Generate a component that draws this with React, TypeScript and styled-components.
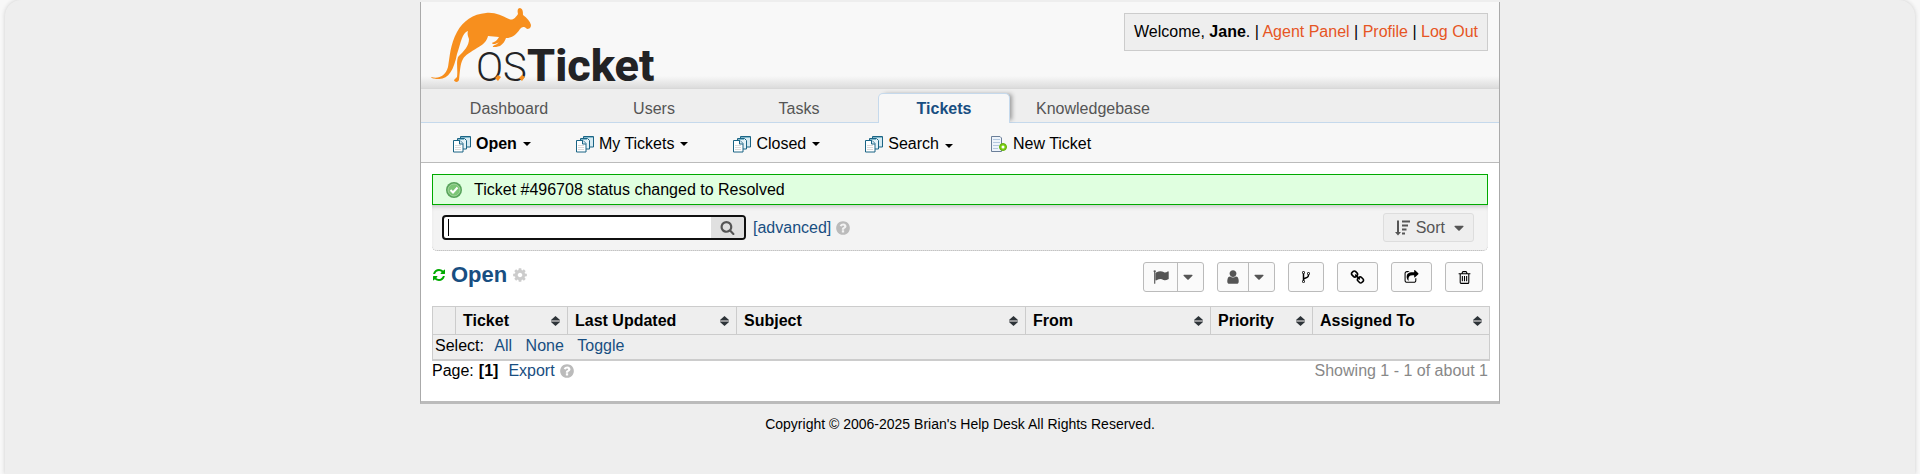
import React from "react";
import styled, { createGlobalStyle, css } from "styled-components";

const GlobalStyle = createGlobalStyle`
  * { box-sizing: border-box; }
  body {
    margin: 0;
    background: #f8f8f8;
    color: #000;
    font: 16px/20px "Liberation Sans", Arial, sans-serif;
  }
  a { color: #184e81; text-decoration: none; }
  button, input { font: inherit; margin: 0; }
`;

const Page = styled.div`
  min-height: 100vh;
  margin: 0 5px;
  padding-top: 2px;
  border-radius: 16px 16px 0 0;
  background: #eee;
  box-shadow: 0 0 4px #ccc;
`;

const Container = styled.div`
  max-width: 1080px;
  margin: 0 auto;
  background: #fff;
  border: 1px solid #aaa;
  border-top: 0;
  border-bottom: 3px solid #bbb;
`;

const Header = styled.header`
  display: flex;
  justify-content: space-between;
  align-items: flex-start;
  height: 87px;
  padding: 0 11px 0 9px;
  background: linear-gradient(to top, #dcdcdc, #f8f8f8 12px);
  border-bottom: 1px solid #d8d8d8;
`;

const UserInfo = styled.p`
  margin: 11px 0 0;
  padding: 8px 9px;
  background: #eee;
  border: 1px solid #ccc;
  a { color: #e65524; }
`;

const Tabs = styled.nav`
  display: flex;
  align-items: flex-end;
  gap: 13px;
  height: 34px;
  padding-left: 22px;
  background: #eee;
  border-bottom: 1px solid #c5d9ec;
`;

const Tab = styled.a<{ $active?: boolean }>`
  min-width: 132px;
  height: 29px;
  padding: 0 12px;
  border: 1px solid transparent;
  border-bottom: 0;
  line-height: 30px;
  text-align: center;
  color: #555;
  ${(p) =>
    p.$active &&
    css`
      height: 30px;
      margin-bottom: -1px;
      background: #f7f7f7;
      border-color: #c5d9ec;
      border-radius: 5px 5px 0 0;
      box-shadow: 4px -1px 4px -2px #999;
      clip-path: inset(-6px -8px 0 -6px);
      color: #184e81;
      font-weight: bold;
    `}
`;

const SubNav = styled.nav`
  display: flex;
  align-items: center;
  gap: 37px;
  height: 40px;
  padding: 2px 0 0 32px;
  background: #f7f7f7;
  border-bottom: 1px solid #bbb;
`;

const SubItem = styled.a<{ $current?: boolean }>`
  display: flex;
  align-items: center;
  gap: 5px;
  color: #000;
  font-weight: ${(p) => (p.$current ? "bold" : "normal")};
`;

const MenuItem = styled(SubItem)`
  & + & { margin-left: 8px; }
`;

const MenuArrow = styled.span<{ $low?: boolean }>`
  margin: ${(p) => (p.$low ? "5px 0 0 1px" : "0 0 0 1px")};
  border: 4px solid transparent;
  border-top-color: currentColor;
  border-bottom: 0;
`;

const Content = styled.main`
  padding: 11px 9px 20px 11px;
`;

const Notice = styled.div`
  display: flex;
  align-items: center;
  gap: 12px;
  height: 31px;
  margin-right: 2px;
  padding-left: 13px;
  background: #e0ffe0;
  border: 1px solid #0a0;
`;

const SearchBar = styled.form`
  display: flex;
  align-items: center;
  height: 46px;
  margin-right: 2px;
  padding: 0 14px 0 10px;
  background: #f3f3f3;
  border-bottom: 1px dotted #aaa;
  border-radius: 0 0 5px 5px;
  box-shadow: inset 0 4px 5px -3px #bbb;
`;

const SearchBox = styled.div`
  display: flex;
  width: 304px;
  height: 25px;
  margin-right: 7px;
  border: 2px solid #101010;
  border-radius: 4px;
  overflow: hidden;
  background: #fff;
`;

const SearchInput = styled.input`
  flex: 1;
  min-width: 0;
  padding: 0 4px;
  border: 0;
  outline: 0;
  caret-color: transparent;
  background: linear-gradient(#000, #000) 4px 2px / 1px 17px no-repeat;
`;

const SearchButton = styled.button`
  width: 33px;
  padding: 0;
  border: 0;
  background: #e0e0e0;
  color: #555;
  line-height: 0;
`;

const HelpLink = styled.a`
  display: inline-flex;
  margin-left: 4px;
  color: #bbb;
`;

const SortButton = styled.button`
  display: flex;
  align-items: center;
  gap: 6px;
  height: 29px;
  margin-left: auto;
  padding: 0 6px 0 11px;
  background: #eee;
  border: 1px solid #ddd;
  border-radius: 3px;
  color: #555;
`;

const TitleRow = styled.div`
  display: flex;
  justify-content: space-between;
  align-items: flex-start;
  padding: 11px 7px 14px 0;
`;

const Title = styled.h2`
  display: flex;
  align-items: center;
  gap: 5px;
  margin: 0;
  font-size: 22px;
  line-height: 26px;
  color: #184e81;
`;

const IconLink = styled.a<{ $color: string }>`
  display: inline-flex;
  color: ${(p) => p.$color};
`;

const Actions = styled.div`
  display: flex;
  gap: 13px;
`;

const Action = styled.button<{ $width: number; $muted?: boolean }>`
  display: flex;
  align-items: stretch;
  justify-content: center;
  width: ${(p) => p.$width}px;
  height: 30px;
  padding: 0;
  background: #fafafa;
  border: 1px solid #bbb;
  border-radius: 3px;
  color: ${(p) => (p.$muted ? "#555" : "#000")};
`;

const ActionPart = styled.span`
  display: flex;
  flex: 1;
  align-items: center;
  justify-content: center;
  & + & {
    flex: 0 0 26px;
    padding-right: 5px;
    border-left: 1px solid #bbb;
  }
`;

const TicketTable = styled.table`
  width: 100%;
  table-layout: fixed;
  border-collapse: separate;
  border-spacing: 0;
  background: #eee;
  border: 1px solid #ccc;
  border-bottom-width: 2px;
`;

const HeadCell = styled.th`
  height: 28px;
  padding: 0 7px 0 7px;
  text-align: left;
  border-bottom: 1px solid #ccc;
  &:not(:last-child) { border-right: 1px solid #ccc; }
`;

const HeadLabel = styled.span`
  display: flex;
  align-items: center;
  justify-content: space-between;
  white-space: nowrap;
`;

const FootCell = styled.td`
  height: 24px;
  padding: 0 2px 2px;
  a { margin-left: 6px; }
  a + a { margin-left: 9px; }
`;

const Pager = styled.div`
  display: flex;
  align-items: center;
  height: 20px;
  margin-right: 2px;
  b { margin-left: 5px; }
  a { margin-left: 10px; }
  a + a { margin-left: 4px; }
`;

const Count = styled.span`
  margin-left: auto;
  color: #888;
`;

const Footer = styled.footer`
  padding: 10px 0;
  text-align: center;
  font-size: 14px;
`;

const paths = {
  search:
    "M1216 832q0-185-131.5-316.5t-316.5-131.5-316.5 131.5-131.5 316.5 131.5 316.5 316.5 131.5 316.5-131.5 131.5-316.5zm512 832q0 52-38 90t-90 38q-54 0-90-38l-343-342q-179 124-399 124-143 0-273.5-55.5t-225-150-150-225-55.5-273.5 55.5-273.5 150-225 225-150 273.5-55.5 273.5 55.5 225 150 150 225 55.5 273.5q0 220-124 399l343 343q37 37 37 90z",
  help:
    "M1024 1376v-192q0-14-9-23t-23-9h-192q-14 0-23 9t-9 23v192q0 14 9 23t23 9h192q14 0 23-9t9-23zm256-672q0-88-55.5-163t-138.5-116-170-41q-243 0-371 213-15 24 8 42l132 100q7 6 19 6 16 0 25-12 53-68 86-92 34-24 86-24 48 0 85.5 26t37.5 59q0 38-20 61t-68 45q-63 28-115.5 86.5t-52.5 125.5v36q0 14 9 23t23 9h192q14 0 23-9t9-23q0-19 21.5-49.5t54.5-49.5q32-18 49-28.5t46-35 44.5-48 28-60.5 12.5-81zm384 192q0 209-103 385.5t-279.5 279.5-385.5 103-385.5-103-279.5-279.5-103-385.5 103-385.5 279.5-279.5 385.5-103 385.5 103 279.5 279.5 103 385.5z",
  refresh:
    "M1639 1056q0 5-1 7-64 268-268 434.5t-478 166.5q-146 0-282.5-55t-243.5-157l-129 129q-19 19-45 19t-45-19-19-45v-448q0-26 19-45t45-19h448q26 0 45 19t19 45-19 45l-137 137q71 66 161 102t187 36q134 0 250-65t186-179q11-17 53-117 8-23 30-23h192q13 0 22.5 9.5t9.5 22.5zm25-800v448q0 26-19 45t-45 19h-448q-26 0-45-19t-19-45 19-45l138-138q-148-137-349-137-134 0-250 65t-186 179q-11 17-53 117-8 23-30 23h-199q-13 0-22.5-9.5t-9.5-22.5v-7q65-268 270-434.5t480-166.5q146 0 284 55.5t245 156.5l130-129q19-19 45-19t45 19 19 45z",
  cog:
    "M1152 896q0-106-75-181t-181-75-181 75-75 181 75 181 181 75 181-75 75-181zm512-109v222q0 12-8 23t-20 13l-185 28q-19 54-39 91 35 50 107 138 10 12 10 25t-9 23q-27 37-99 108t-94 71q-12 0-26-9l-138-108q-44 23-91 38-16 136-29 186-7 28-36 28h-222q-14 0-24.5-8.5t-11.5-21.5l-28-184q-49-16-90-37l-141 107q-10 9-25 9-14 0-25-11-126-114-165-168-7-10-7-23 0-12 8-23 15-21 51-66.5t54-70.5q-27-50-41-99l-183-27q-13-2-21-12.5t-8-23.5v-222q0-12 8-23t19-13l186-28q14-46 39-92-40-57-107-138-10-12-10-24 0-10 9-23 26-36 98.5-107.5t94.5-71.5q13 0 26 10l138 107q44-23 91-38 16-136 29-186 7-28 36-28h222q14 0 24.5 8.5t11.5 21.5l28 184q49 16 90 37l142-107q9-9 24-9 13 0 25 10 129 119 165 170 7 8 7 22 0 12-8 23-15 21-51 66.5t-54 70.5q26 50 41 98l183 28q13 2 21 12.5t8 23.5z",
  fork:
    "M672 1472q0-40-28-68t-68-28-68 28-28 68 28 68 68 28 68-28 28-68zm0-1152q0-40-28-68t-68-28-68 28-28 68 28 68 68 28 68-28 28-68zm640 128q0-40-28-68t-68-28-68 28-28 68 28 68 68 28 68-28 28-68zm96 0q0 52-26 96.5t-70 69.5q-2 287-226 414-67 38-203 81-128 40-169.5 71t-41.5 100v26q44 25 70 69.5t26 96.5q0 80-56 136t-136 56-136-56-56-136q0-52 26-96.5t70-69.5v-820q-44-25-70-69.5t-26-96.5q0-80 56-136t136-56 136 56 56 136q0 52-26 96.5t-70 69.5v497q54-26 154-57 55-17 87.5-29.5t70.5-31 59-39.5 40.5-51 28-69.5 8.5-91.5q-44-25-70-69.5t-26-96.5q0-80 56-136t136-56 136 56 56 136z",
  link:
    "M1520 1216q0-40-28-68l-208-208q-28-28-68-28-42 0-72 32 3 3 19 18.5t21.5 21.5 15 19 13 25.5 3.5 27.5q0 40-28 68t-68 28q-15 0-27.5-3.5t-25.5-13-19-15-21.5-21.5-18.5-19q-33 31-33 73 0 40 28 68l206 207q27 27 68 27 40 0 68-26l147-146q28-28 28-67zm-703-705q0-40-28-68l-206-207q-28-28-68-28-39 0-68 27l-147 146q-28 28-28 67 0 40 28 68l208 208q27 27 68 27 42 0 72-31-3-3-19-18.5t-21.5-21.5-15-19-13-25.5-3.5-27.5q0-40 28-68t68-28q15 0 27.5 3.5t25.5 13 19 15 21.5 21.5 18.5 19q33-31 33-73zm895 705q0 120-85 203l-147 146q-83 83-203 83-121 0-204-85l-206-207q-83-83-83-203 0-123 88-209l-88-88q-86 88-208 88-120 0-204-84l-208-208q-84-84-84-204t85-203l147-146q83-83 203-83 121 0 204 85l206 207q83 83 83 203 0 123-88 209l88 88q86-88 208-88 120 0 204 84l208 208q84 84 84 204z",
  share:
    "M1472 989v259q0 119-84.5 203.5t-203.5 84.5h-832q-119 0-203.5-84.5t-84.5-203.5v-832q0-119 84.5-203.5t203.5-84.5h255q13 0 22.5 9.5t9.5 22.5q0 27-26 32-77 26-133 60-10 4-16 4h-112q-66 0-113 47t-47 113v832q0 66 47 113t113 47h832q66 0 113-47t47-113v-214q0-19 18-29 28-13 54-37 16-16 35-8 21 9 21 29zm237-496l-384 384q-18 19-45 19-12 0-25-5-39-17-39-59v-192h-160q-323 0-438 131-119 137-74 473 3 23-20 34-8 2-12 2-16 0-26-13-10-14-21-31t-39.5-68.5-49.5-99.5-38.5-114-17.5-122q0-49 3.5-91t14-90 28-88 47-81.5 68.5-74 94.5-61.5 124.5-48.5 159.5-30.5 196.5-11h160v-192q0-42 39-59 13-5 25-5 26 0 45 19l384 384q19 19 19 45t-19 45z",
  trash:
    "M704 736v576q0 14-9 23t-23 9h-64q-14 0-23-9t-9-23v-576q0-14 9-23t23-9h64q14 0 23 9t9 23zm256 0v576q0 14-9 23t-23 9h-64q-14 0-23-9t-9-23v-576q0-14 9-23t23-9h64q14 0 23 9t9 23zm256 0v576q0 14-9 23t-23 9h-64q-14 0-23-9t-9-23v-576q0-14 9-23t23-9h64q14 0 23 9t9 23zm128 724v-948h-896v948q0 22 7 40.5t14.5 27 10.5 8.5h832q3 0 10.5-8.5t14.5-27 7-40.5zm-672-1076h448l-48-117q-7-9-17-11h-317q-10 2-17 11zm928 32v64q0 14-9 23t-23 9h-96v948q0 83-47 143.5t-113 60.5h-832q-66 0-113-58.5t-47-141.5v-952h-96q-14 0-23-9t-9-23v-64q0-14 9-23t23-9h309l70-167q15-37 54-63t79-26h320q40 0 79 26t54 63l70 167h309q14 0 23 9t9 23z",
  flag:
    "M320 256q0 72-64 110v1266q0 13-9.500 22.500t-22.500 9.500h-64q-13 0-22.500-9.500t-9.500-22.500v-1266q-64-38-64-110 0-53 37.500-90.500t90.500-37.500 90.500 37.500 37.500 90.500zm1440 64v763q0 25-12.500 38.500t-39.500 27.500q-215 116-369 116-61 0-123.500-22t-108.500-48-115.500-48-142.500-22q-192 0-464 146-17 9-33 9-26 0-45-19t-19-45v-742q0-32 31-55 21-14 79-43 236-120 421-120 107 0 200 29t219 88q38 19 88 19 54 0 117.500-21t110-47 88-47 54.500-21q26 0 45 19t19 45z",
  user:
    "M1536 1399q0 109-62.500 187t-150.500 78h-854q-88 0-150.500-78t-62.500-187q0-85 8.500-160.500t31.500-152 58.500-131 94-89 134.500-34.500q131 128 313 128t313-128q76 0 134.500 34.500t94 89 58.500 131 31.500 152 8.500 160.500zm-256-887q0 159-112.500 271.500t-271.500 112.500-271.500-112.500-112.500-271.500 112.500-271.500 271.500-112.500 271.500 112.500 112.500 271.500z",
  caret:
    "M1408 704q0 26-19 45l-448 448q-19 19-45 19t-45-19l-448-448q-19-19-19-45t19-45 45-19h896q26 0 45 19t19 45z",
};

function Icon({ name, size = 16 }: { name: keyof typeof paths; size?: number }) {
  return (
    <svg width={size} height={size} viewBox="0 0 1792 1792" fill="currentColor" aria-hidden="true">
      <path d={paths[name]} />
    </svg>
  );
}

function StackIcon() {
  return (
    <svg width="18" height="18" viewBox="0 0 18 18" stroke="#1a6485" aria-hidden="true">
      <path d="M7.500 1.500h10v10.500h-10z" fill="#d5eaf2" />
      <path d="M8 2.500h9" stroke="#82b8cb" />
      <path d="M4.500 3.500h7l2 2v8.500h-9z" fill="#e6f3f8" />
      <path d="M5 4.500h6" stroke="#82b8cb" />
      <path d="M.5 5.500h6.500l3 3v8.500h-9.500z" fill="#fff" />
      <path d="M6.500 5.500v3.500h3.500" fill="#d5eaf2" />
      <path d="M2 10.500h6M2 12.500h6M2 14.500h6" stroke="#dadada" />
    </svg>
  );
}

function NewTicketIcon() {
  return (
    <svg width="18" height="18" viewBox="0 0 18 18" aria-hidden="true">
      <path d="M1.500 1.500h8.500l1.500 1.500v13.500h-10z" fill="#eef4fb" stroke="#6b7f99" />
      <path d="M3 4.500h7M3 7.500h7M3 10.500h6M3 13.500h5" stroke="#b3c8df" />
      <circle cx="13" cy="12" r="3.500" fill="#7ed012" stroke="#5fae0c" />
      <circle cx="13" cy="12" r="1.500" fill="#fff" />
    </svg>
  );
}

function OkIcon() {
  return (
    <svg width="16" height="16" viewBox="0 0 16 16" aria-hidden="true">
      <circle cx="8" cy="8" r="8" fill="#57a35a" />
      <circle cx="8" cy="8" r="6" fill="#7cc576" stroke="#a4d79e" />
      <path d="M4.500 8l2.500 2.500 4.500-5" fill="none" stroke="#fff" strokeWidth="2" />
    </svg>
  );
}

function SortIcon() {
  return (
    <svg width="15" height="16" viewBox="0 0 15 16" fill="currentColor" aria-hidden="true">
      <path d="M2 .5h2v11.500h2l-3 3.500-3-3.500h2zM7 .5h8v2h-8zM7 4.500h6v2h-6zM7 8.500h4.500v2h-4.500zM7 12.500h3v2h-3z" />
    </svg>
  );
}

function SortArrows() {
  return (
    <svg width="9" height="10" viewBox="0 0 9 10" fill="#2d3338" aria-hidden="true">
      <path d="M4.500 0l4.500 4v.5h-9v-.5zM0 5.500h9v.5l-4.500 4-4.500-4z" />
      <path d="M0 4.500h9v1h-9z" fill="#999" />
    </svg>
  );
}

function Logo() {
  return (
    <svg width="234" height="86" viewBox="0 0 234 86" role="img" aria-label="osTicket">
      <path
        fill="#f78f1e"
        d="M1 75C8 77 15 75 18 65C20 54 20 43 27 30C33 19 43 12 56 11C65 10 72 14 79 17C83 19 86 15 88 12C87 8 88 6 90 6C93 7 93 10 93 13C97 16 100 19 101 23C101 26 99 27 97 27C94 24 92 25 90 27C86 33 82 36 76 36C75 39 73 42 70 44C67 45 65 45 63 45C62 44 65 43 67 42L69 40C65 43 62 42 62 41C64 40 67 39 69 35L58 34C57 39 53 43 47 46C41 50 35 53 33 57C30 62 30 70 29 78C28 81 24 80 24 78L27 75C28 68 26 61 28 55C34 49 39 44 39 37C38 34 37 32 38 29C32 31 31 40 27 52C24 68 18 78 8 77C4 77 1 76 1 75Z"
      />
      <g fill="#232325" fontFamily="Roboto">
        <text x="46" y="79" fontWeight="300" fontSize="40">OS</text>
        <text x="97" y="79" fontWeight="800" fontSize="45">Ticket</text>
      </g>
      <path d="M65 76l3-3 3 2-3 4zM89 76l3-3 3 2-3 4z" fill="#f78f1e" />
    </svg>
  );
}

const queues = [
  { label: "Open", current: true },
  { label: "My Tickets" },
  { label: "Closed" },
  { label: "Search", low: true },
];

const tabs = ["Dashboard", "Users", "Tasks", "Tickets", "Knowledgebase"];

const columns = [
  { label: "Ticket", width: "112px" },
  { label: "Last Updated", width: "169px" },
  { label: "Subject", width: "auto" },
  { label: "From", width: "185px" },
  { label: "Priority", width: "102px" },
  { label: "Assigned To", width: "176px" },
];

export default function App() {
  return (
    <>
      <GlobalStyle />
      <Page>
        <Container>
          <Header>
            <a href="#home">
              <Logo />
            </a>
            <UserInfo>
              Welcome, <b>Jane</b>. | <a href="#agent">Agent Panel</a> | <a href="#profile">Profile</a> |{" "}
              <a href="#logout">Log Out</a>
            </UserInfo>
          </Header>
          <Tabs>
            {tabs.map((t) => (
              <Tab key={t} href={`#${t}`} $active={t === "Tickets"}>
                {t}
              </Tab>
            ))}
          </Tabs>
          <SubNav>
            {queues.map((q) => (
              <MenuItem key={q.label} href={`#${q.label}`} $current={q.current}>
                <StackIcon />
                {q.label}
                <MenuArrow $low={q.low} />
              </MenuItem>
            ))}
            <SubItem href="#new">
              <NewTicketIcon />
              New Ticket
            </SubItem>
          </SubNav>
          <Content>
            <Notice role="status">
              <OkIcon />
              Ticket #496708 status changed to Resolved
            </Notice>
            <SearchBar onSubmit={(e) => e.preventDefault()}>
              <SearchBox>
                <SearchInput type="text" aria-label="Search tickets" />
                <SearchButton type="submit" aria-label="Search">
                  <Icon name="search" size={15} />
                </SearchButton>
              </SearchBox>
              <a href="#advanced">[advanced]</a>
              <HelpLink href="#help" aria-label="Help">
                <Icon name="help" />
              </HelpLink>
              <SortButton type="button">
                <SortIcon />
                Sort
                <Icon name="caret" />
              </SortButton>
            </SearchBar>
            <TitleRow>
              <Title>
                <IconLink href="#refresh" aria-label="Refresh" $color="#0a0">
                  <Icon name="refresh" size={14} />
                </IconLink>
                Open
                <IconLink href="#settings" aria-label="Queue settings" $color="#ccc">
                  <Icon name="cog" />
                </IconLink>
              </Title>
              <Actions>
                <Action type="button" aria-label="Change status" $width={61} $muted>
                  <ActionPart><Icon name="flag" /></ActionPart>
                  <ActionPart><Icon name="caret" /></ActionPart>
                </Action>
                <Action type="button" aria-label="Assign" $width={58} $muted>
                  <ActionPart><Icon name="user" /></ActionPart>
                  <ActionPart><Icon name="caret" /></ActionPart>
                </Action>
                <Action type="button" aria-label="Merge" $width={36}>
                  <ActionPart><Icon name="fork" size={14} /></ActionPart>
                </Action>
                <Action type="button" aria-label="Link" $width={41}>
                  <ActionPart><Icon name="link" size={15} /></ActionPart>
                </Action>
                <Action type="button" aria-label="Transfer" $width={41}>
                  <ActionPart><Icon name="share" size={15} /></ActionPart>
                </Action>
                <Action type="button" aria-label="Delete" $width={38}>
                  <ActionPart><Icon name="trash" size={15} /></ActionPart>
                </Action>
              </Actions>
            </TitleRow>
            <TicketTable>
              <colgroup>
                <col width="23" />
                {columns.map((c) => (
                  <col key={c.label} width={c.width} />
                ))}
              </colgroup>
              <thead>
                <tr>
                  <HeadCell aria-label="Selected" />
                  {columns.map((c) => (
                    <HeadCell key={c.label} scope="col">
                      <HeadLabel>
                        {c.label}
                        <SortArrows />
                      </HeadLabel>
                    </HeadCell>
                  ))}
                </tr>
              </thead>
              <tbody>
                <tr>
                  <FootCell colSpan={7}>
                    Select: <a href="#all">All</a> <a href="#none">None</a> <a href="#toggle">Toggle</a>
                  </FootCell>
                </tr>
              </tbody>
            </TicketTable>
            <Pager>
              Page: <b>[1]</b>
              <a href="#export">Export</a>
              <HelpLink href="#export-help" aria-label="Export help">
                <Icon name="help" />
              </HelpLink>
              <Count>Showing 1 - 1 of about 1</Count>
            </Pager>
          </Content>
        </Container>
        <Footer>Copyright © 2006-2025 Brian's Help Desk All Rights Reserved.</Footer>
      </Page>
    </>
  );
}
